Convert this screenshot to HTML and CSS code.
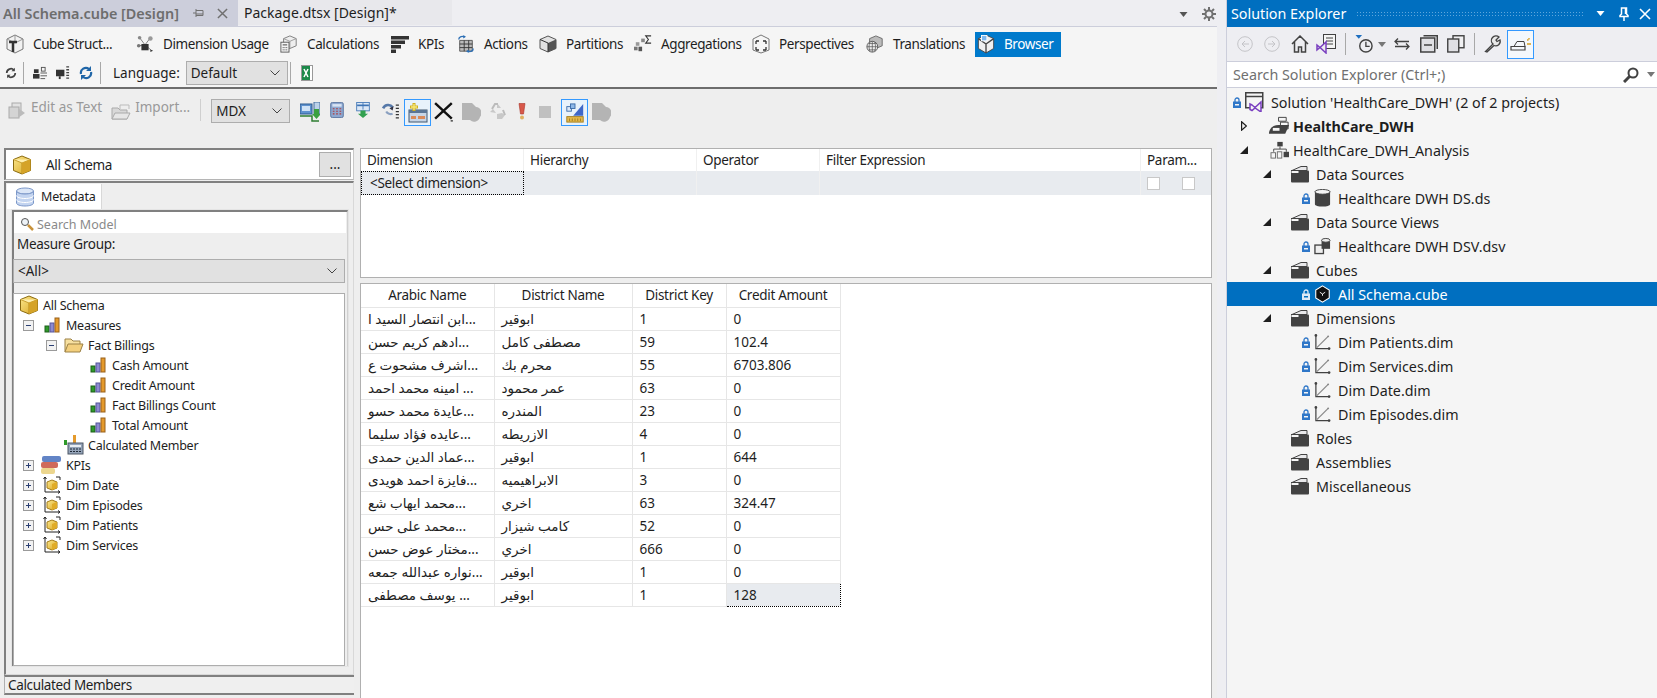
FILE: index.html
```html
<!DOCTYPE html>
<html lang="en">
<head>
<meta charset="utf-8">
<title>All Schema.cube [Design]</title>
<link rel="stylesheet" href="styles.css">
</head>
<body>
<svg class="defs" aria-hidden="true">
  <defs>
    <linearGradient id="gold" x1="0" y1="0" x2="1" y2="1"><stop offset="0" stop-color="#fbe88e"/><stop offset="1" stop-color="#d9a520"/></linearGradient>
    <symbol id="cube" viewBox="0 0 20 20"><path d="M10 1l8.5 3.5v11L10 19l-8.5-3.5v-11z" fill="url(#gold)" stroke="#8a6a10"/><path d="M1.500 4.500L10 8l8.500-3.500" fill="#fff0b0" stroke="#c9a030"/><path d="M10 8v11" stroke="#b88a18"/><path d="M10 8l8.500-3.500v11L10 19z" fill="#d5a328"/></symbol>
    <symbol id="bars" viewBox="0 0 16 16"><rect x="1" y="9" width="4" height="6" fill="#2f9a2a" stroke="#1d5f1a"/><rect x="6" y="6" width="4" height="9" fill="#8d8ad0" stroke="#56549a"/><rect x="11" y="1" width="4" height="14" fill="#e49a2c" stroke="#99601a"/></symbol>
    <symbol id="fopen" viewBox="0 0 20 18"><path d="M1 16V3h6l2 2h7v3" fill="#f7e0a0" stroke="#9c8146"/><path d="M1 16l3-8h15l-3 8z" fill="#f3cf7d" stroke="#9c8146"/></symbol>
    <symbol id="calc" viewBox="0 0 20 20"><rect x="0" y="5" width="3" height="5" fill="#2f9a2a"/><rect x="9" y="0" width="3" height="9" fill="#e49a2c"/><rect x="4" y="8" width="15" height="11" fill="#94a3b8" stroke="#4c5766"/><rect x="6" y="10" width="11" height="2" fill="#e8edf3"/><path d="M6 14h2M9 14h2M12 14h2M15 14h2M6 16.500h2M9 16.500h2M12 16.500h2M15 16.500h2" stroke="#1f2a38"/></symbol>
    <symbol id="kpi" viewBox="0 0 20 20"><rect x="1" y="1" width="19" height="6" rx="2" fill="#6284c6"/><rect x="0" y="7" width="17" height="6" rx="2" fill="#cf6a5c"/><rect x="0" y="13" width="14" height="6" rx="2" fill="#ecd68e"/></symbol>
    <symbol id="dim" viewBox="0 0 18 18"><path d="M2 1v15h15M2 1l-1.500 2M2 1l1.500 2M17 16l-2-1.500M17 16l-2 1.500M13 1h4v3" fill="none" stroke="#222"/><path d="M9 4l5 2v6l-5 2-5-2V6z" fill="url(#gold)" stroke="#a57d18"/><path d="M9 8l5-2v6l-5 2z" fill="#e0ac28"/></symbol>
    <symbol id="metadata" viewBox="0 0 20 20"><ellipse cx="10" cy="4" rx="8.500" ry="3" fill="#dbe6f7" stroke="#7c98c9"/><path d="M1.500 4v12c0 1.700 3.800 3 8.500 3s8.500-1.300 8.500-3V4c0 1.700-3.800 3-8.500 3s-8.500-1.300-8.500-3z" fill="#c3d4f0" stroke="#7c98c9"/><path d="M1.500 8.500c0 1.700 3.800 3 8.500 3s8.500-1.300 8.500-3M1.500 12.500c0 1.700 3.800 3 8.500 3s8.500-1.300 8.500-3" fill="none" stroke="#fff"/></symbol>
    <symbol id="mag" viewBox="0 0 14 14"><circle cx="5" cy="5" r="3.500" fill="#eef3f8" stroke="#555"/><path d="M8 8l5 5" stroke="#c8923a" stroke-width="2.500"/></symbol>

    <symbol id="d-struct" viewBox="0 0 18 20"><path d="M9 1l8 4v10l-8 4-8-4V5z" fill="#f2f2f2" stroke="#777"/><path d="M9 1v6M1 5l8 4 8-4" fill="none" stroke="#999"/><path d="M3 8h8M7 8v10" stroke="#333" stroke-width="2.500"/></symbol>
    <symbol id="d-usage" viewBox="0 0 20 20"><path d="M4 3l6 8 6-8M10 11l7 6M3 12l7-1" stroke="#777" fill="none"/><circle cx="4" cy="3" r="2" fill="#888"/><circle cx="16" cy="4" r="2.500" fill="#999"/><circle cx="3" cy="12" r="2" fill="#777"/><path d="M6 10h8v7H6z" fill="#333"/><path d="M16 16l3 1.500-3 1.500z" fill="#333"/></symbol>
    <symbol id="d-calc" viewBox="0 0 20 20"><path d="M11 1l7 3v8l-7 3-7-3V4z" fill="#eee" stroke="#777"/><path d="M4 4l7 3 7-3M11 7v8" fill="none" stroke="#999"/><rect x="1" y="8" width="9" height="11" fill="#f4f4f4" stroke="#555"/><path d="M3 11h5M3 14h1M5 14h1M7 14h1M3 16.500h1M5 16.500h1M7 16.500h1" stroke="#333"/></symbol>
    <symbol id="d-kpi" viewBox="0 0 18 18"><path d="M0 1h18v3.500H0zM0 5.500h14V9H0zM0 10h10v3.500H0zM0 14.500h5V18H0z" fill="#333"/></symbol>
    <symbol id="d-actions" viewBox="0 0 20 20"><path d="M3 6h14v12H3z" fill="#bbb" stroke="#555"/><path d="M3 10h14M3 14h14M8 6v12M13 6v12" stroke="#333"/><path d="M2 5c0-3 3-4 6-3M18 15c0 3-3 4-6 3" fill="none" stroke="#2c6fb5" stroke-width="1.500"/><path d="M7 0l3 2-3 2zM13 16l-3 2 3 2z" fill="#2c6fb5"/></symbol>
    <symbol id="d-part" viewBox="0 0 18 18"><path d="M9 1l8 3.500v9L9 17l-8-3.500v-9z" fill="#e2e2e2" stroke="#555"/><path d="M9 8l8-3.500v9L9 17z" fill="#555"/><path d="M1 4.500L9 8v9" fill="none" stroke="#333"/></symbol>
    <symbol id="d-agg" viewBox="0 0 20 20"><rect x="0" y="13" width="4" height="4" fill="#777"/><rect x="2" y="8" width="4" height="4" fill="#999"/><rect x="5" y="13" width="4" height="5" fill="#555"/><rect x="8" y="4" width="4" height="4" fill="#888"/><path d="M19 1h-6l3 4-3 4h6" fill="none" stroke="#333" stroke-width="1.200"/></symbol>
    <symbol id="d-persp" viewBox="0 0 18 20"><path d="M9 1l8 4v11l-8 3-8-3V5z" fill="#f6f6f6" stroke="#777"/><path d="M4 7v3M4 7h3M14 7v3M14 7h-3M4 16v-3M4 16h3M14 16v-3M14 16h-3" stroke="#333" stroke-width="1.300" fill="none"/></symbol>
    <symbol id="d-trans" viewBox="0 0 20 20"><path d="M11 1l7 3v8l-7 3-7-3V4z" fill="#bbb" stroke="#666"/><circle cx="7" cy="13" r="6" fill="#eee" stroke="#555"/><path d="M1 13h12M7 7v12M3 9.500h8M3 16.500h8M4.500 8c-1.500 3-1.500 7 0 10M9.500 8c1.500 3 1.500 7 0 10" stroke="#555" fill="none" stroke-width=".8"/></symbol>
    <symbol id="d-browser" viewBox="0 0 20 22"><path d="M10 1l8.500 4v11L10 21l-8.500-5V5z" fill="#f0f0f0" stroke="#444"/><path d="M10 11l8.500-6M10 11L1.500 5M10 11v10" stroke="#444" stroke-width="1.500"/><rect x="5" y="1.500" width="6" height="6" fill="#7db8ef" stroke="#fff"/></symbol>

    <symbol id="t-refresh" viewBox="0 0 14 14"><path d="M2 7a5 5 0 0 1 8.500-3.500M12 7a5 5 0 0 1-8.500 3.500" fill="none" stroke="#444" stroke-width="2"/><path d="M11.500 1v4h-4zM2.500 13V9h4z" fill="#444"/></symbol>
    <symbol id="t-users" viewBox="0 0 15 14"><rect x="1" y="3" width="5" height="4" fill="#333"/><path d="M0 13V8h7v5z" fill="#333"/><rect x="9" y="1" width="4" height="4" fill="none" stroke="#555"/><path d="M8 7h7M8 10h7M8 13h5" stroke="#555"/></symbol>
    <symbol id="t-server" viewBox="0 0 15 15"><path d="M0 4h9v7H0z" fill="#333"/><path d="M4 11v3" stroke="#333" stroke-width="2"/><path d="M11 1h3M11 4h3M11 7h3M11 10h3M11 13h3" stroke="#444" stroke-width="1.400"/></symbol>
    <symbol id="t-sync" viewBox="0 0 14 14"><path d="M2 8a5 5 0 0 1 8-5M12 6a5 5 0 0 1-8 5" fill="none" stroke="#2066a8" stroke-width="2.200"/><path d="M12 0v5H7zM2 14V9h5z" fill="#2066a8"/></symbol>
    <symbol id="t-excel" viewBox="0 0 12 16"><rect x=".5" y=".5" width="11" height="15" fill="#fff" stroke="#999"/><rect x="1" y="1" width="8" height="14" fill="#1d8a4a"/><path d="M3 4l4 8M7 4l-4 8" stroke="#fff" stroke-width="1.500"/></symbol>
    <symbol id="chev" viewBox="0 0 10 6"><path d="M.5.500L5 5l4.500-4.500" fill="none" stroke="#444"/></symbol>

    <symbol id="b-edit" viewBox="0 0 18 18"><rect x="4" y="1" width="9" height="11" fill="#e2e2e2" stroke="#aaa"/><rect x="1" y="5" width="10" height="11" fill="#d4d4d4" stroke="#aaa"/><path d="M10 6l7 5-7 5z" fill="#bbb"/></symbol>
    <symbol id="b-import" viewBox="0 0 20 18"><path d="M1 16V5h6l2 2h7v9z" fill="#d8d8d8" stroke="#aaa"/><path d="M9 6V2h9v4" fill="#eee" stroke="#bbb"/><path d="M1 16l3-6h15l-3 6z" fill="#e6e6e6" stroke="#aaa"/></symbol>
    <symbol id="b-connect" viewBox="0 0 20 20"><rect x="0" y="2" width="12" height="10" fill="#5f92cf" stroke="#2d5a90"/><rect x="2" y="4" width="8" height="5" fill="#cfe2f6"/><rect x="14" y="0" width="6" height="12" fill="#bcd2ea" stroke="#466f9e"/><path d="M0 14h12v5h7" fill="none" stroke="#2e7d32" stroke-width="1.500"/><path d="M14 7h5v5h2l-4.500 5-4.500-5h2z" fill="#3aa040"/></symbol>
    <symbol id="b-calc" viewBox="0 0 16 19"><rect x=".5" y=".5" width="15" height="18" rx="2" fill="#8ea8d0" stroke="#4d6b98"/><rect x="2.500" y="2.500" width="11" height="3" fill="#d8e4f4"/><path d="M3 8h2M7 8h2M11 8h2M3 11h2M7 11h2M11 11h2M3 14h2M7 14h2M11 14h2" stroke="#b03a3a" stroke-width="1.400"/></symbol>
    <symbol id="b-arrow" viewBox="0 0 16 19"><rect x=".5" y=".5" width="15" height="10" fill="#dce8f6" stroke="#3e74b5"/><path d="M1 4h14" stroke="#3e74b5" stroke-width="2"/><path d="M8 1v8" stroke="#3e74b5"/><path d="M5 10h6v4h3l-6 5-6-5h3z" fill="#32a050"/></symbol>
    <symbol id="b-link" viewBox="0 0 17 15"><path d="M1 5c2-4 7-4 9-1" fill="none" stroke="#5678a8" stroke-width="2.500"/><path d="M4 8c1 2 4 3 6 2" fill="none" stroke="#8aa0c0" stroke-width="2"/><path d="M11 3l-1 4-3-2z" fill="#334"/><path d="M13 2h3M13 5h3M13 8h3M13 11h3M13 14h3" stroke="#333" stroke-width="1.200"/></symbol>
    <symbol id="b-plus" viewBox="0 0 20 20"><rect x="1" y="7" width="18" height="12" fill="#c7d5e6" stroke="#40566f"/><rect x="1" y="7" width="18" height="3" fill="#5a7595"/><rect x="3" y="13" width="5" height="3" fill="#d98a5a"/><rect x="10" y="13" width="7" height="3" fill="#d98a5a"/><path d="M6 0v8M2 4h8" stroke="#d0b020" stroke-width="3"/><path d="M6 1v6M3 4h6" stroke="#f7e878" stroke-width="1.400"/></symbol>
    <symbol id="b-x" viewBox="0 0 18 18"><path d="M1 1l15 14M16 1L1 15" stroke="#111" stroke-width="2.200"/><path d="M15 17h2" stroke="#111"/></symbol>
    <symbol id="b-blob" viewBox="0 0 20 20"><path d="M1 1h10l4 4a6 6 0 0 1 4 10 6 6 0 0 1-10 3H1z" fill="#b4b4b4"/></symbol>
    <symbol id="b-recy" viewBox="0 0 18 18"><path d="M9 1l4 5H9zM2 10l3-3 3 4zM9 17v-5l5-1 3 2-3 4z" fill="#c8c8c8"/><path d="M4 7l3-5h3M15 8l2 5" stroke="#bbb" stroke-width="2" fill="none"/></symbol>
    <symbol id="b-bang" viewBox="0 0 10 18"><path d="M2 1.500h6L6.500 12h-3z" fill="#d8584a" stroke="#a83428" stroke-width=".6"/><circle cx="5" cy="15.500" r="2" fill="#e0b060"/></symbol>
    <symbol id="b-ruler" viewBox="0 0 20 22"><path d="M19 1v13H8z" fill="#3f67c8"/><rect x="1" y="4" width="5" height="5" fill="#dce8f8" stroke="#3a6aa8"/><rect x="5" y="1" width="5" height="5" fill="#8eb8e8" stroke="#3a6aa8"/><rect x="1" y="15" width="18" height="6" fill="#e5b84a" stroke="#a07c1c"/><path d="M4 17v3M7 17v3M10 17v3M13 17v3M16 17v3" stroke="#a07c1c"/></symbol>

    <symbol id="s-back" viewBox="0 0 16 16"><circle cx="8" cy="8" r="7.300" fill="none" stroke="#c4c4c8"/><path d="M12 8H5M8 5L5 8l3 3" fill="none" stroke="#c4c4c8"/></symbol>
    <symbol id="s-fwd" viewBox="0 0 16 16"><circle cx="8" cy="8" r="7.300" fill="none" stroke="#c4c4c8"/><path d="M4 8h7M8 5l3 3-3 3" fill="none" stroke="#c4c4c8"/></symbol>
    <symbol id="s-home" viewBox="0 0 18 18"><path d="M1 9l8-8 8 8M3.500 7v10h4v-5h3v5h4V7" fill="none" stroke="#424242" stroke-width="1.500"/></symbol>
    <symbol id="s-vs" viewBox="0 0 20 20"><rect x="7.500" y=".5" width="12" height="14" fill="#f5f5f5" stroke="#424242"/><path d="M10 4h7M10 7h7M10 10h7" stroke="#424242"/><path d="M1 11l3 2.500L10 8v11l-6-5.500L1 16z" fill="#eee" stroke="#7a3fc0" stroke-width="1.500"/></symbol>
    <symbol id="s-hist" viewBox="0 0 18 19"><path d="M0 0h7L3.500 4z" fill="#1f6fc0"/><circle cx="11" cy="11.500" r="6.500" fill="none" stroke="#424242" stroke-width="1.500"/><path d="M11 7v5h4" fill="none" stroke="#424242" stroke-width="1.400"/></symbol>
    <symbol id="s-down" viewBox="0 0 8 5"><path d="M0 0h8L4 5z" fill="currentColor"/></symbol>
    <symbol id="s-sync" viewBox="0 0 16 13"><path d="M1 4h14M15 9H1M4 1L1 4l3 3M12 6l3 3-3 3" fill="none" stroke="#424242" stroke-width="1.300"/></symbol>
    <symbol id="s-coll" viewBox="0 0 18 18"><path d="M3.500.75h13.750V14" fill="none" stroke="#424242" stroke-width="1.500"/><rect x=".75" y="3" width="14" height="14" fill="#e0e0e4" stroke="#424242" stroke-width="1.500"/><path d="M4 10h8" stroke="#424242" stroke-width="1.500"/></symbol>
    <symbol id="s-copy" viewBox="0 0 18 18"><rect x="6" y=".75" width="11" height="12" fill="#f0f0f2" stroke="#424242" stroke-width="1.400"/><rect x=".75" y="4" width="11" height="13" fill="#e0e0e4" stroke="#424242" stroke-width="1.400"/></symbol>
    <symbol id="s-wrench" viewBox="0 0 18 18"><path d="M1.500 16.500L9 9a4.500 4.500 0 0 1 6-7l-3 3 1 1.500L16 5a4.500 4.500 0 0 1-6 5.500L3 17z" fill="#e8e8e8" stroke="#424242" stroke-width="1.300"/></symbol>
    <symbol id="s-prev" viewBox="0 0 22 14"><path d="M1 9.500h14V13H1z" fill="none" stroke="#424242" stroke-width="1.200"/><path d="M4 9.500l3-5h7l1 5" fill="none" stroke="#424242"/><path d="M17 3h1.500M17 7h4M19 1v1.500" stroke="#d8a020" stroke-width="1.400"/></symbol>
    <symbol id="s-pin" viewBox="0 0 12 14"><path d="M3.500 1h5v6l1.500 1.500v1H2v-1L3.500 7z" fill="none" stroke="currentColor" stroke-width="1.500"/><path d="M6 10v4" stroke="currentColor" stroke-width="1.500"/><path d="M7.500 1v6" stroke="currentColor" stroke-width="1.500"/></symbol>
    <symbol id="s-x" viewBox="0 0 12 12"><path d="M1 1l10 10M11 1L1 11" stroke="currentColor" stroke-width="1.600"/></symbol>
    <symbol id="s-search" viewBox="0 0 16 16"><circle cx="10" cy="6" r="4.500" fill="none" stroke="#424242" stroke-width="2"/><path d="M7 9l-6 6" stroke="#424242" stroke-width="3"/></symbol>
    <symbol id="s-gear" viewBox="0 0 14 14"><circle cx="7" cy="7" r="3.500" fill="none" stroke="#707070" stroke-width="2"/><path d="M7 0v3M7 11v3M0 7h3M11 7h3M2 2l2 2M10 10l2 2M12 2l-2 2M4 10l-2 2" stroke="#707070" stroke-width="2"/></symbol>
    <symbol id="s-tabpin" viewBox="0 0 11 10"><path d="M0 5h3M3 1v8M3 2.500h7v5H3M3 6h7" fill="none" stroke="#707070"/></symbol>

    <symbol id="e-lock" viewBox="0 0 8 11"><path d="M2 5V3a2 2 0 0 1 4 0v2" fill="none" stroke="currentColor" stroke-width="1.300"/><path d="M0 4.500h8V11H0zM2 7v1.500h4V7z" fill="currentColor" fill-rule="evenodd"/></symbol>
    <symbol id="e-arrh" viewBox="0 0 6 10"><path d="M.6.800L5.400 5 .6 9.200z" fill="none" stroke="#1e1e1e" stroke-width="1.200"/></symbol>
    <symbol id="e-sol" viewBox="0 0 19 20"><rect x=".75" y=".75" width="17" height="15" fill="#f5f5f5" stroke="#424242" stroke-width="1.500"/><path d="M1 4.500h17" stroke="#424242" stroke-width="1.500"/><path d="M7 13l3 2.500 6-5.500v10l-6-4-3 2.500-2-1v-5.500z" fill="#f5f5f5" stroke="#7a3fc0" stroke-width="1.500"/></symbol>
    <symbol id="e-proj" viewBox="0 0 24 20"><path d="M11 1h8v4h-8z" fill="none" stroke="#424242"/><path d="M13 6h8v7h-8z" fill="#f5f5f5" stroke="#424242"/><path d="M1 18c0-6 5-9 10-9h11l-4 9z" fill="#424242"/><path d="M5 12h7v3H5z" fill="#f5f5f5"/></symbol>
    <symbol id="e-ssas" viewBox="0 0 22 20"><rect x="8" y="1" width="6" height="5" fill="#424242"/><path d="M11 6v3M4 12V9h14v3" fill="none" stroke="#424242"/><rect x="1" y="13" width="5" height="6" fill="#f5f5f5" stroke="#666"/><rect x="8" y="12" width="5" height="7" fill="#f5f5f5" stroke="#666"/><rect x="15" y="12" width="6" height="6" fill="#424242"/></symbol>
    <symbol id="e-folder" viewBox="0 0 18 17"><path d="M1 5l9-4h6v4z" fill="#e8e8ea" stroke="#424242"/><rect x="0" y="5" width="18" height="12" rx="1" fill="#424242"/><path d="M0 5h8v3H0z" fill="#f5f5f5" stroke="#424242"/></symbol>
    <symbol id="e-db" viewBox="0 0 17 19"><path d="M.5 3v13c0 1.500 3.500 2.500 8 2.500s8-1 8-2.500V3z" fill="#424242"/><ellipse cx="8.500" cy="3" rx="8" ry="2.500" fill="#f5f5f5" stroke="#424242"/></symbol>
    <symbol id="e-dsv" viewBox="0 0 18 18"><rect x="1" y="8" width="9" height="9" fill="#eee" stroke="#424242" stroke-width="1.400"/><path d="M10 6h4M10 6v2" stroke="#424242"/><path d="M8 3v9h9V3z" fill="#424242"/><ellipse cx="12.500" cy="3" rx="4.500" ry="2" fill="#eee" stroke="#424242"/></symbol>
    <symbol id="e-cube" viewBox="0 0 18 20"><path d="M9 1l7.500 4.500v9L9 19l-7.500-4.500v-9z" fill="#111" stroke="#fff" stroke-width="1.200"/><path d="M6 8l3 2 3-2M9 10v2" fill="none" stroke="#fff"/></symbol>
    <symbol id="e-dim" viewBox="0 0 18 18"><path d="M2 2v14h14" fill="none" stroke="#424242" stroke-width="1.300"/><path d="M3 15L15 3" stroke="#888" stroke-width="1.300"/><circle cx="2" cy="2" r="1.400" fill="#424242"/><circle cx="16" cy="16" r="1.400" fill="#424242"/><circle cx="15" cy="3" r="1" fill="#888"/></symbol>
  </defs>
</svg>

<div class="app">
  <main class="main">
    <div class="doctabs">
      <div class="doctab doctab-on"><span>All Schema.cube [Design]</span><svg class="tabpin"><use href="#s-tabpin"/></svg><svg class="tabx"><use href="#s-x"/></svg></div>
      <div class="doctab doctab-off">Package.dtsx [Design]*</div>
      <div class="docspacer"></div>
      <svg class="docdown"><use href="#s-down"/></svg>
      <svg class="docgear"><use href="#s-gear"/></svg>
    </div>
    <div class="designer">
      <nav class="dtabs">
        <div class="dtab"><svg class="dico"><use href="#d-struct"/></svg>Cube Struct...</div>
        <div class="dtab"><svg class="dico"><use href="#d-usage"/></svg>Dimension Usage</div>
        <div class="dtab"><svg class="dico"><use href="#d-calc"/></svg>Calculations</div>
        <div class="dtab"><svg class="dico"><use href="#d-kpi"/></svg>KPIs</div>
        <div class="dtab"><svg class="dico"><use href="#d-actions"/></svg>Actions</div>
        <div class="dtab"><svg class="dico"><use href="#d-part"/></svg>Partitions</div>
        <div class="dtab"><svg class="dico"><use href="#d-agg"/></svg>Aggregations</div>
        <div class="dtab"><svg class="dico"><use href="#d-persp"/></svg>Perspectives</div>
        <div class="dtab"><svg class="dico"><use href="#d-trans"/></svg>Translations</div>
        <div class="dtab dtab-on"><svg class="dico"><use href="#d-browser"/></svg>Browser</div>
      </nav>
      <div class="dtools">
        <svg class="i12 ml0"><use href="#t-refresh"/></svg>
        <span class="tsep ml6"></span>
        <svg class="i14 ml9"><use href="#t-users"/></svg>
        <svg class="i14 ml9"><use href="#t-server"/></svg>
        <svg class="i14 ml9"><use href="#t-sync"/></svg>
        <span class="tsep ml7"></span>
        <span class="tlabel ml12">Language:</span>
        <div class="combo combo-lang ml6"><span>Default</span><svg class="chev"><use href="#chev"/></svg></div>
        <span class="tsep ml2"></span>
        <svg class="i12x ml10"><use href="#t-excel"/></svg>
      </div>
      <div class="browser">
        <div class="btools">
          <svg class="i18 ml0"><use href="#b-edit"/></svg>
          <span class="tlabel tmuted ml5">Edit as Text</span>
          <svg class="i20 ml9"><use href="#b-import"/></svg>
          <span class="tlabel tmuted ml4">Import...</span>
          <span class="tsep tsep-soft ml10"></span>
          <div class="combo combo-mdx ml10"><span>MDX</span><svg class="chev"><use href="#chev"/></svg></div>
          <svg class="i20 ml10"><use href="#b-connect"/></svg>
          <svg class="i16 ml9"><use href="#b-calc"/></svg>
          <svg class="i16 ml10"><use href="#b-arrow"/></svg>
          <svg class="i18 ml11"><use href="#b-link"/></svg>
          <span class="tbtn ml4"><svg class="i20"><use href="#b-plus"/></svg></span>
          <svg class="i20 ml3"><use href="#b-x"/></svg>
          <svg class="i20 ml7"><use href="#b-blob"/></svg>
          <svg class="i18 ml7"><use href="#b-recy"/></svg>
          <svg class="i10 ml11"><use href="#b-bang"/></svg>
          <span class="stopbox ml12"></span>
          <span class="tbtn ml10"><svg class="i20"><use href="#b-ruler"/></svg></span>
          <svg class="i20 ml3"><use href="#b-blob"/></svg>
        </div>
        <div class="bbody">
          <aside class="left">
            <div class="cubepick">
              <svg class="i20"><use href="#cube"/></svg>
              <span class="cubename">All Schema</span>
              <button class="dots" type="button">...</button>
            </div>
            <div class="metapanel">
              <div class="metatab"><svg class="i20"><use href="#metadata"/></svg>Metadata</div>
              <div class="metabody">
                <div class="metainner">
                  <div class="searchmodel"><svg class="i14"><use href="#mag"/></svg><span>Search Model</span></div>
                  <div class="mglabel">Measure Group:</div>
                  <div class="combo combo-all"><span>&lt;All&gt;</span><svg class="chev"><use href="#chev"/></svg></div>
                  <div class="mtree">
                    <div class="mrow m0"><svg class="i20"><use href="#cube"/></svg><span class="mtext mt-root">All Schema</span></div>
                    <div class="mrow m1"><span class="exp"></span><svg class="i16 ico1"><use href="#bars"/></svg><span class="mtext mt-1">Measures</span></div>
                    <div class="mrow m2"><span class="exp"></span><svg class="i20 ico2"><use href="#fopen"/></svg><span class="mtext mt-2">Fact Billings</span></div>
                    <div class="mrow m3"><svg class="i16"><use href="#bars"/></svg><span class="mtext mt-3">Cash Amount</span></div>
                    <div class="mrow m3"><svg class="i16"><use href="#bars"/></svg><span class="mtext mt-3">Credit Amount</span></div>
                    <div class="mrow m3"><svg class="i16"><use href="#bars"/></svg><span class="mtext mt-3">Fact Billings Count</span></div>
                    <div class="mrow m3"><svg class="i16"><use href="#bars"/></svg><span class="mtext mt-3">Total Amount</span></div>
                    <div class="mrow m4"><svg class="i20"><use href="#calc"/></svg><span class="mtext mt-4">Calculated Member</span></div>
                    <div class="mrow m1"><span class="exp exp-plus"></span><svg class="i20 ico1b"><use href="#kpi"/></svg><span class="mtext mt-1b">KPIs</span></div>
                    <div class="mrow m1"><span class="exp exp-plus"></span><svg class="i18 ico1c"><use href="#dim"/></svg><span class="mtext mt-1c">Dim Date</span></div>
                    <div class="mrow m1"><span class="exp exp-plus"></span><svg class="i18 ico1c"><use href="#dim"/></svg><span class="mtext mt-1c">Dim Episodes</span></div>
                    <div class="mrow m1"><span class="exp exp-plus"></span><svg class="i18 ico1c"><use href="#dim"/></svg><span class="mtext mt-1c">Dim Patients</span></div>
                    <div class="mrow m1"><span class="exp exp-plus"></span><svg class="i18 ico1c"><use href="#dim"/></svg><span class="mtext mt-1c">Dim Services</span></div>
                  </div>
                </div>
              </div>
            </div>
            <div class="calcmembers">Calculated Members</div>
          </aside>
          <section class="right">
            <div class="filter">
              <div class="fgrid fhead">
                <div class="fcell">Dimension</div><div class="fcell">Hierarchy</div><div class="fcell">Operator</div><div class="fcell">Filter Expression</div><div class="fcell">Param...</div>
              </div>
              <div class="fgrid frow">
                <div class="fcell fsel">&lt;Select dimension&gt;</div><div class="fcell"></div><div class="fcell"></div><div class="fcell"></div>
                <div class="fcell fchecks"><span class="chk"></span><span class="chk"></span></div>
              </div>
            </div>
            <div class="results">
              <table class="rtable">
                <colgroup><col class="c1"><col class="c2"><col class="c3"><col class="c4"></colgroup>
                <thead><tr><th>Arabic Name</th><th>District Name</th><th>District Key</th><th>Credit Amount</th></tr></thead>
                <tbody>
                  <tr><td>ابن انتصار السيد ا...</td><td>ابوقير</td><td>1</td><td>0</td></tr>
                  <tr><td>ادهم كريم حسن...</td><td>مصطفى كامل</td><td>59</td><td>102.4</td></tr>
                  <tr><td>اشرف مشحوت ع...</td><td>محرم بك</td><td>55</td><td>6703.806</td></tr>
                  <tr><td>امينه محمد احمد ...</td><td>عمر محمود</td><td>63</td><td>0</td></tr>
                  <tr><td>عايدة محمد حسو...</td><td>المندره</td><td>23</td><td>0</td></tr>
                  <tr><td>عايده فؤاد سليما...</td><td>الازريطه</td><td>4</td><td>0</td></tr>
                  <tr><td>عماد الدين حمدى...</td><td>ابوقير</td><td>1</td><td>644</td></tr>
                  <tr><td>فايزة احمد هويدى...</td><td>الابراهيميه</td><td>3</td><td>0</td></tr>
                  <tr><td>محمد ايهاب شع...</td><td>اخري</td><td>63</td><td>324.47</td></tr>
                  <tr><td>محمد على حس...</td><td>كامب شيزار</td><td>52</td><td>0</td></tr>
                  <tr><td>مختار عوض حسن...</td><td>اخري</td><td>666</td><td>0</td></tr>
                  <tr><td>نواره عبدالله جمعه...</td><td>ابوقير</td><td>1</td><td>0</td></tr>
                  <tr><td>يوسف مصطفى ...</td><td>ابوقير</td><td>1</td><td class="cellsel">128</td></tr>
                </tbody>
              </table>
            </div>
          </section>
        </div>
      </div>
    </div>
  </main>

  <aside class="se">
    <header class="setitle">
      <span class="setext">Solution Explorer</span>
      <span class="segrip"></span>
      <svg class="sedown"><use href="#s-down"/></svg>
      <svg class="sepin"><use href="#s-pin"/></svg>
      <svg class="sex"><use href="#s-x"/></svg>
    </header>
    <div class="setools">
      <svg class="i16 sm10"><use href="#s-back"/></svg>
      <svg class="i16 sm11"><use href="#s-fwd"/></svg>
      <svg class="i18 sm11"><use href="#s-home"/></svg>
      <svg class="i20 sm7"><use href="#s-vs"/></svg>
      <span class="tsep sm9"></span>
      <svg class="i18 sm9"><use href="#s-hist"/></svg>
      <svg class="sedrop sm5"><use href="#s-down"/></svg>
      <svg class="i16 sm8"><use href="#s-sync"/></svg>
      <svg class="i18 sm10"><use href="#s-coll"/></svg>
      <svg class="i18 sm9"><use href="#s-copy"/></svg>
      <span class="tsep sm9"></span>
      <svg class="i18 sm9"><use href="#s-wrench"/></svg>
      <span class="sebtn sm5"><svg class="i22"><use href="#s-prev"/></svg></span>
    </div>
    <div class="sesearch">
      <span class="sesearchtext">Search Solution Explorer (Ctrl+;)</span>
      <svg class="i16"><use href="#s-search"/></svg>
      <svg class="sedrop sm8"><use href="#s-down"/></svg>
    </div>
    <div class="setree">
      <div class="srow r-sol"><svg class="lock"><use href="#e-lock"/></svg><svg class="i19 ic4"><use href="#e-sol"/></svg><span class="stxt t7">Solution 'HealthCare_DWH' (2 of 2 projects)</span></div>
      <div class="srow r-projh"><svg class="arrh"><use href="#e-arrh"/></svg><svg class="i23 after-arr-p"><use href="#e-proj"/></svg><span class="stxt t2 bold">HealthCare_DWH</span></div>
      <div class="srow r-proj"><span class="arr"></span><svg class="i22 after-arr-p"><use href="#e-ssas"/></svg><span class="stxt t2">HealthCare_DWH_Analysis</span></div>
      <div class="srow r-fold"><span class="arr"></span><svg class="i18 after-arr-f"><use href="#e-folder"/></svg><span class="stxt t7">Data Sources</span></div>
      <div class="srow r-child"><svg class="lock"><use href="#e-lock"/></svg><svg class="i17 ic4"><use href="#e-db"/></svg><span class="stxt t7">Healthcare DWH DS.ds</span></div>
      <div class="srow r-fold"><span class="arr"></span><svg class="i18 after-arr-f"><use href="#e-folder"/></svg><span class="stxt t7">Data Source Views</span></div>
      <div class="srow r-child"><svg class="lock"><use href="#e-lock"/></svg><svg class="i17 ic4"><use href="#e-dsv"/></svg><span class="stxt t7">Healthcare DWH DSV.dsv</span></div>
      <div class="srow r-fold"><span class="arr"></span><svg class="i18 after-arr-f"><use href="#e-folder"/></svg><span class="stxt t7">Cubes</span></div>
      <div class="srow r-child srow-on"><svg class="lock"><use href="#e-lock"/></svg><svg class="i17 ic4"><use href="#e-cube"/></svg><span class="stxt t7">All Schema.cube</span></div>
      <div class="srow r-fold"><span class="arr"></span><svg class="i18 after-arr-f"><use href="#e-folder"/></svg><span class="stxt t7">Dimensions</span></div>
      <div class="srow r-child"><svg class="lock"><use href="#e-lock"/></svg><svg class="i17 ic4"><use href="#e-dim"/></svg><span class="stxt t7">Dim Patients.dim</span></div>
      <div class="srow r-child"><svg class="lock"><use href="#e-lock"/></svg><svg class="i17 ic4"><use href="#e-dim"/></svg><span class="stxt t7">Dim Services.dim</span></div>
      <div class="srow r-child"><svg class="lock"><use href="#e-lock"/></svg><svg class="i17 ic4"><use href="#e-dim"/></svg><span class="stxt t7">Dim Date.dim</span></div>
      <div class="srow r-child"><svg class="lock"><use href="#e-lock"/></svg><svg class="i17 ic4"><use href="#e-dim"/></svg><span class="stxt t7">Dim Episodes.dim</span></div>
      <div class="srow r-leaf"><svg class="i18"><use href="#e-folder"/></svg><span class="stxt t7">Roles</span></div>
      <div class="srow r-leaf"><svg class="i18"><use href="#e-folder"/></svg><span class="stxt t7">Assemblies</span></div>
      <div class="srow r-leaf"><svg class="i18"><use href="#e-folder"/></svg><span class="stxt t7">Miscellaneous</span></div>
    </div>
  </aside>
</div>
</body>
</html>
```

FILE: styles.css
```css
* { box-sizing: border-box; }
html, body { margin: 0; height: 698px; overflow: hidden; }
body {
  font-family: "Noto Sans", "DejaVu Sans", sans-serif;
  font-size: 13.5px;
  color: #1e1e1e;
  background: #eeeef2;
}
svg { display: block; flex: none; overflow: visible; }
.defs { width: 0; height: 0; }

.app { display: grid; grid-template-columns: 1227px 430px; height: 698px; }

/* sizes */
.i10 { width: 10px; height: 18px; }
.i12 { width: 12px; height: 14px; }
.i12x { width: 12px; height: 16px; }
.i14 { width: 14px; height: 14px; }
.i16 { width: 16px; height: 16px; }
.i17 { width: 17px; height: 18px; }
.i18 { width: 18px; height: 18px; }
.i19 { width: 19px; height: 20px; }
.i20 { width: 20px; height: 20px; }
.i22 { width: 22px; height: 18px; }
.i23 { width: 23px; height: 20px; }

/* margin steps */
.ml0 { margin-left: 0; } .ml2 { margin-left: 2px; } .ml3 { margin-left: 3px; } .ml4 { margin-left: 4px; }
.ml5 { margin-left: 5px; } .ml6 { margin-left: 6px; } .ml7 { margin-left: 7px; } .ml9 { margin-left: 9px; }
.ml10 { margin-left: 10px; } .ml11 { margin-left: 11px; } .ml12 { margin-left: 12px; }
.sm5 { margin-left: 5px; } .sm7 { margin-left: 7px; } .sm8 { margin-left: 8px; } .sm9 { margin-left: 9px; }
.sm10 { margin-left: 10px; } .sm11 { margin-left: 11px; }

/* document well */
.main { display: flex; flex-direction: column; height: 698px; padding-right: 9px; border-right: 1px solid #cccedb; min-width: 0; }
.doctabs { display: flex; align-items: flex-start; height: 27px; border-bottom: 1px solid #cccedb; flex: none; }
.doctab { height: 26px; display: flex; align-items: center; white-space: nowrap; font-size: 14px; }
.doctab-on { width: 238px; background: #cccedb; padding-left: 3px; font-weight: 600; font-size: 14.4px; color: #6d6d6d; }
.doctab-off { width: 214px; height: 25px; background: #e8e8ec; padding-left: 6px; color: #1e1e1e; }
.tabpin { width: 11px; height: 10px; margin-left: 14px; }
.tabx { width: 11px; height: 11px; margin-left: 13px; color: #707070; }
.docspacer { flex: 1; }
.docdown { width: 9px; height: 5px; margin-top: 12px; color: #555; }
.docgear { width: 14px; height: 14px; margin: 7px 1px 0 14px; }

.designer { flex: 1; display: flex; flex-direction: column; background: #f5f5f5; min-height: 0; }
.dtabs {
  flex: none; height: 34px; padding-top: 5px; padding-left: 4px;
  display: grid; grid-template-columns: 130px 144px 111px 66px 82px 95px 118px 114px 111px 86px;
}
.dtab { height: 25px; padding: 0 0 1px 2px; display: flex; align-items: center; white-space: nowrap; letter-spacing: -.4px; }
.dico { width: 18px; height: 20px; margin-right: 9px; }
.dtab-on { background: #007acc; color: #fff; }

.dtools { flex: none; height: 28px; padding: 0 0 2px 5px; display: flex; align-items: center; border-bottom: 2px solid #6d6d6d; }
.tsep { width: 1px; height: 22px; background: #a8a8a8; flex: none; }
.tsep-soft { background: #cfcfcf; }
.tlabel { white-space: nowrap; }
.tmuted { color: #999; }

.combo { display: flex; align-items: center; justify-content: space-between; background: #e1e1e1; border: 1px solid #adadad; padding: 0 7px 0 4px; flex: none; }
.chev { width: 10px; height: 6px; }
.combo-lang { width: 102px; height: 24px; }
.combo-mdx { width: 79px; height: 24px; }
.combo-all { width: 332px; height: 24px; margin: 4px 0 0 -1px; }

.browser { flex: 1; display: flex; flex-direction: column; background: #eeeeee; min-height: 0; }
.btools { flex: none; height: 59px; padding: 10px 0 0 8px; display: flex; align-items: flex-start; }
.btools > svg { margin-top: 3px; }
.btools > .tlabel { margin-top: -1px; }
.tbtn { width: 27px; height: 27px; border: 1px solid #3399ff; background: #e8f2fb; display: flex; align-items: center; justify-content: center; flex: none; }
.stopbox { width: 12px; height: 12px; background: #c0c0c0; flex: none; margin-top: 7px; }

.bbody { flex: 1; display: flex; min-height: 0; }

/* left */
.left { width: 350px; margin-left: 4px; display: flex; flex-direction: column; flex: none; }
.cubepick { height: 32px; flex: none; display: flex; align-items: center; padding: 0 2px 0 6px; background: #fff; border: 2px solid #808080; border-right-color: #c8c8c8; border-bottom: 1px solid #b5b5b5; border-right-width: 1px; }
.cubename { margin-left: 14px; flex: 1; letter-spacing: -.3px; }
.dots { width: 32px; height: 25px; background: #e1e1e1; border: 1px solid #adadad; padding: 0; font: inherit; color: #1e1e1e; line-height: 1; }
.metapanel { flex: 1; margin-top: 1px; border-top: 2px solid #808080; border-left: 2px solid #808080; border-right: 1px solid #d8d8d8; border-bottom: 1px solid #d8d8d8; display: flex; flex-direction: column; min-height: 0; padding-top: 1px; }
.metatab { width: 95px; height: 25px; background: #fff; flex: none; display: flex; align-items: center; gap: 6px; padding-left: 8px; margin-left: 1px; border-right: 1px solid #d8d8d8; font-size: 12.5px; letter-spacing: -.2px; }
.metabody { flex: 1; border: 1px solid #e4e4e4; margin-left: 5px; margin-right: 4px; margin-bottom: 7px; min-height: 0; display: flex; }
.metainner { flex: 1; border-top: 2px solid #808080; border-left: 2px solid #808080; border-right: 1px solid #d0d0d0; display: flex; flex-direction: column; }
.searchmodel { height: 21px; background: #fff; display: flex; align-items: center; gap: 3px; padding: 3px 0 0 6px; color: #8a8a8a; margin-right: 1px; flex: none; font-size: 12.5px; }
.mglabel { height: 22px; display: flex; align-items: center; padding-left: 3px; flex: none; letter-spacing: -.3px; }
.mtree { flex: 1; margin: 10px 0 0 -1px; width: 332px; background: #fff; border: 1px solid #adadad; padding-top: 1px; font-size: 12.5px; letter-spacing: -.25px; }
.mrow { height: 20px; display: flex; align-items: center; white-space: nowrap; }
.m0 { padding-left: 5px; }
.m1 { padding-left: 9px; }
.m2 { padding-left: 32px; }
.m3 { padding-left: 76px; }
.m4 { padding-left: 50px; }
.mtext { margin-left: 5px; }
.mt-root { margin-left: 4px; }
.mt-2 { margin-left: 4px; }
.mt-3 { margin-left: 6px; }
.mt-4 { margin-left: 4px; }
.mt-1b, .mt-1c { margin-left: 5px; }
.mt-1 { margin-left: 6px; }
.ico1 { margin-left: 10px; }
.ico1b { margin-left: 7px; }
.ico1c { margin-left: 9px; }
.ico2 { margin-left: 7px; }
.exp { width: 11px; height: 11px; flex: none; border: 1px solid #9a9a9a; background: linear-gradient(90deg, transparent 2px, #2b3f73 2px, #2b3f73 calc(100% - 2px), transparent calc(100% - 2px)) center / 100% 1px no-repeat, #f2f2f2; }
.exp-plus { background: linear-gradient(90deg, transparent 2px, #2b3f73 2px, #2b3f73 calc(100% - 2px), transparent calc(100% - 2px)) center / 100% 1px no-repeat, linear-gradient(#2b3f73, #2b3f73) center / 1px 5px no-repeat, #f2f2f2; }
.calcmembers { height: 20px; flex: none; margin-bottom: 3px; background: #efefef; border-top: 2px solid #808080; border-bottom: 2px solid #808080; border-left: 1px solid #b0b0b0; padding-left: 3px; display: flex; align-items: center; letter-spacing: -.35px; }

/* right */
.right { width: 852px; margin-left: 6px; flex: none; display: flex; flex-direction: column; gap: 5px; min-height: 0; letter-spacing: -.3px; }
.filter { height: 130px; flex: none; background: #fff; border: 1px solid #b0b0b0; }
.fgrid { display: grid; grid-template-columns: 163px 173px 123px 321px 70px; }
.fhead { height: 22px; }
.frow { height: 24px; background: #e8ebef; }
.fcell { border-right: 1px solid #f0f0f0; display: flex; align-items: center; padding-left: 6px; white-space: nowrap; overflow: hidden; }
.fhead .fcell:last-child, .frow .fcell:last-child { border-right: 0; }
.fsel { border: 1px dotted #000; padding-left: 8px; }
.fchecks { padding-left: 6px; gap: 22px; }
.chk { width: 13px; height: 13px; background: #fff; border: 1px solid #c8c8c8; flex: none; }

.results { flex: 1; background: #fff; border: 1px solid #b0b0b0; border-bottom: 0; min-height: 0; overflow: hidden; }
.rtable { border-collapse: collapse; table-layout: fixed; width: 479px; }
.c1 { width: 133px; } .c2 { width: 138px; } .c3 { width: 94px; } .c4 { width: 114px; }
.rtable th { height: 23px; font-weight: 400; text-align: center; border-right: 1px solid #e6e6e6; border-bottom: 1px solid #e6e6e6; padding: 0; white-space: nowrap; }
.rtable td { height: 23px; border-right: 1px solid #e6e6e6; border-bottom: 1px solid #e6e6e6; padding: 0 7px; white-space: nowrap; overflow: hidden; letter-spacing: 0; }
.rtable .cellsel { background: #e8ebef; border: 1px dotted #000; }

/* solution explorer */
.se { display: flex; flex-direction: column; height: 698px; background: #f5f5f5; font-size: 14.3px; }
.setitle { height: 27px; flex: none; background: #006fc0; color: #fff; display: flex; align-items: center; padding-left: 4px; }
.setext { white-space: nowrap; }
.segrip { flex: 1; height: 6px; margin: 0 13px 0 10px; background-image: radial-gradient(circle, #5ea6dd 0.8px, transparent 1px); background-size: 3px 3px; }
.sedown { width: 9px; height: 5px; color: #fff; }
.sepin { width: 12px; height: 14px; margin-left: 13px; color: #fff; }
.sex { width: 12px; height: 12px; margin: 0 6px 0 9px; color: #fff; }
.setools { height: 34px; flex: none; background: #eeeef2; display: flex; align-items: center; }
.sedrop { width: 8px; height: 5px; color: #777; }
.sebtn { width: 27px; height: 29px; border: 1px solid #3399ff; background: #f4f8fc; display: flex; align-items: center; justify-content: center; flex: none; }
.sesearch { height: 27px; flex: none; background: #fff; border: 1px solid #cccedb; border-width: 1px 0; display: flex; align-items: center; padding-left: 6px; padding-right: 2px; }
.sesearchtext { flex: 1; color: #707070; white-space: nowrap; }
.setree { flex: 1; padding-top: 2px; }
.srow { height: 24px; display: flex; align-items: center; white-space: nowrap; }
.lock { width: 8px; height: 11px; color: #2f77c8; }
.srow-on { background: #006fc0; color: #fff; }
.srow-on .lock { color: #dbe9f6; }
.r-sol { padding-left: 6px; }
.r-proj { padding-left: 13px; }
.r-projh { padding-left: 14px; }
.r-fold { padding-left: 36px; }
.r-child { padding-left: 75px; }
.r-leaf { padding-left: 64px; }
.arr { width: 0; height: 0; flex: none; border-style: solid; border-width: 0 0 8px 8px; border-color: transparent transparent #1e1e1e transparent; }
.arrh { width: 6px; height: 10px; }
.after-arr-p { margin-left: 21px; }
.after-arr-f { margin-left: 20px; }
.ic4 { margin-left: 4px; }
.stxt { display: block; }
.t2 { margin-left: 2px; }
.t7 { margin-left: 7px; }
.bold { font-weight: 700; }
```
